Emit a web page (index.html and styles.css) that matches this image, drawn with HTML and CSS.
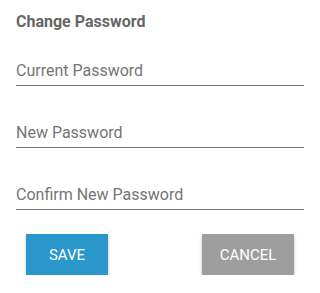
FILE: index.html
```html
<!DOCTYPE html>
<html>
<head>
<meta charset="utf-8">
<link rel="stylesheet" href="styles.css">
</head>
<body>
<div class="panel">
  <h2 class="title">Change Password</h2>
  <div class="fields">
    <div class="field"><span class="label">Current Password</span></div>
    <div class="field"><span class="label">New Password</span></div>
    <div class="field"><span class="label">Confirm New Password</span></div>
  </div>
  <div class="actions">
    <button class="btn btn-save">SAVE</button>
    <button class="btn btn-cancel">CANCEL</button>
  </div>
</div>
</body>
</html>
```
FILE: styles.css
```css
html, body {
  margin: 0;
  padding: 0;
  background: #ffffff;
}
.panel {
  font-family: Roboto, "Noto Sans", sans-serif;
  padding: 12px 16px 0 16px;
  width: 288px;
}
.title {
  margin: 0;
  font-size: 16px;
  font-weight: 700;
  color: #666666;
  line-height: 20px;
}
.fields {
  display: flex;
  flex-direction: column;
  gap: 8px;
}
.field {
  height: 53px;
  box-sizing: content-box;
  border-bottom: 1px solid #757575;
  display: flex;
  align-items: flex-end;
}
.label {
  font-size: 16px;
  color: #757575;
  line-height: 19px;
  padding-bottom: 5px;
}
.actions {
  display: flex;
  justify-content: space-between;
  padding: 24px 10px 0 10px;
}
.btn {
  border: none;
  height: 41px;
  font-family: Roboto, sans-serif;
  font-size: 15px;
  color: #ffffff;
  box-shadow: 0 2px 3px rgba(0,0,0,0.25);
  padding: 0;
}
.btn-save {
  width: 82px;
  background: #2996cc;
}
.btn-cancel {
  width: 92px;
  background: #9e9e9e;
}
```
